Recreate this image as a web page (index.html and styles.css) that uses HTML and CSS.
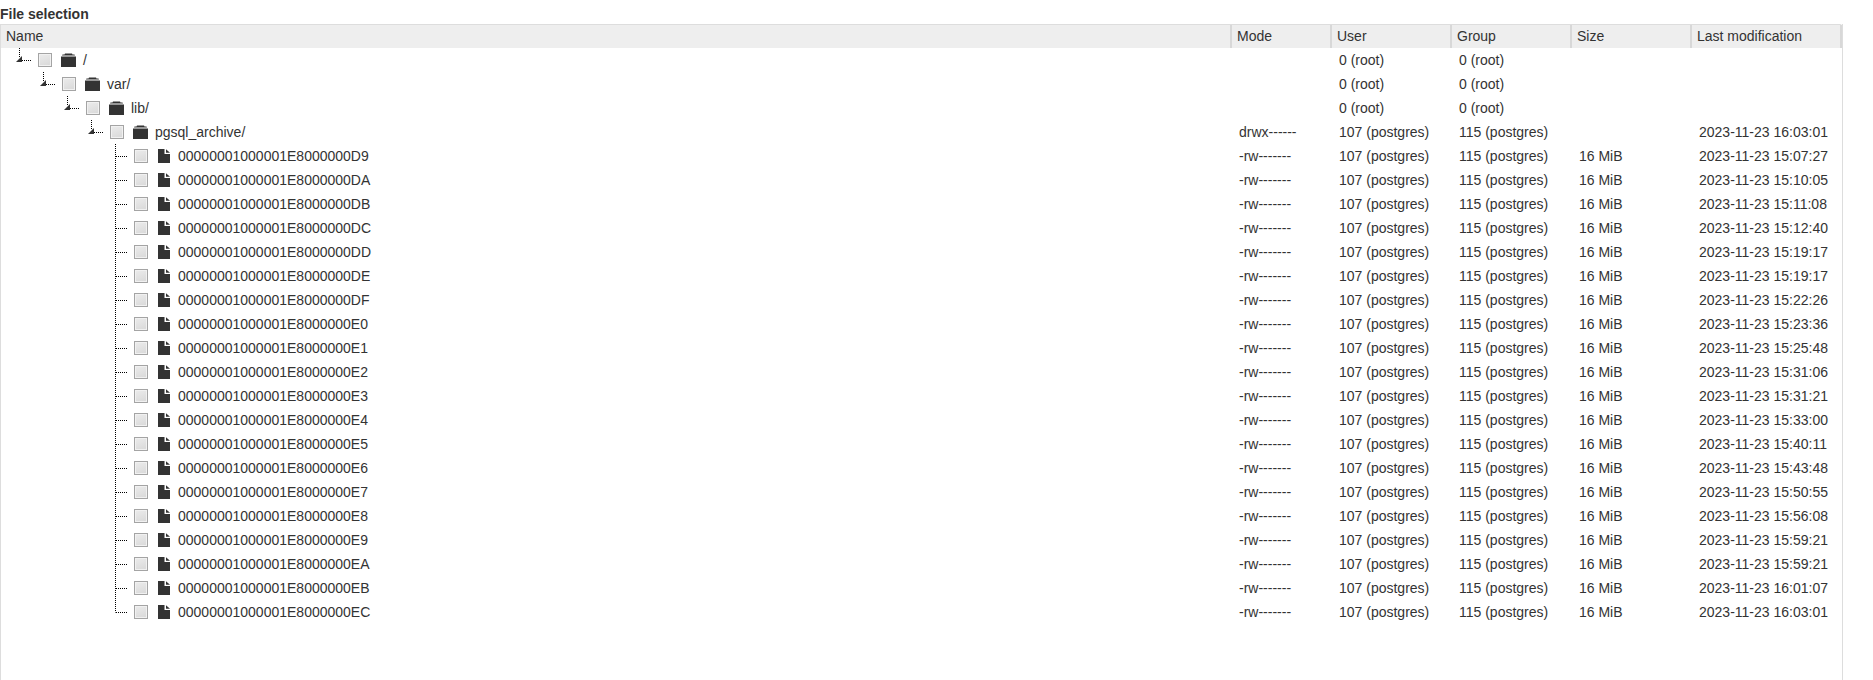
FILE: index.html
```html
<!DOCTYPE html>
<html lang="en">
<head>
<meta charset="utf-8">
<title>File selection</title>
<link rel="stylesheet" href="styles.css">
</head>
<body>
<svg class="defs" width="0" height="0" aria-hidden="true">
<symbol id="folder" viewBox="0 0 15 14"><path d="M0 3.500h15V14H0z M4 0.500h7l0.500 1h2l0.500 1H1l0.500-1h2z" fill="#333"/></symbol>
<symbol id="file" viewBox="0 0 12 14"><path d="M0 0h6.500v5H12V14H0z M8 0.300 12 3.800H8z" fill="#333"/></symbol>
<symbol id="open" viewBox="0 0 24 24"><path d="M5.500 0v10M8 12.500h10" stroke="#000" stroke-dasharray="1 1" fill="none"/><path d="M8 8v6H2z" fill="#333"/></symbol>
<symbol id="branch" viewBox="0 0 24 24"><path d="M5.500 0v24M6 12.500h12" stroke="#000" stroke-dasharray="1 1" fill="none"/></symbol>
<symbol id="last" viewBox="0 0 24 24"><path d="M5.500 0v12.500M6 12.500h12" stroke="#000" stroke-dasharray="1 1" fill="none"/></symbol>
</svg>
<h1 class="title">File selection</h1>
<div class="panel">
<div class="row head"><div class="c name">Name</div><div class="c mode">Mode</div><div class="c user">User</div><div class="c group">Group</div><div class="c size">Size</div><div class="c last">Last modification</div></div>
<div class="row"><div class="c name"><span class="ind l0"></span><svg class="tw"><use href="#open"/></svg><i class="cb"></i><svg class="ic"><use href="#folder"/></svg><span>/</span></div><div class="c mode"></div><div class="c user">0 (root)</div><div class="c group">0 (root)</div><div class="c size"></div><div class="c last"></div></div>
<div class="row"><div class="c name"><span class="ind l1"></span><svg class="tw"><use href="#open"/></svg><i class="cb"></i><svg class="ic"><use href="#folder"/></svg><span>var/</span></div><div class="c mode"></div><div class="c user">0 (root)</div><div class="c group">0 (root)</div><div class="c size"></div><div class="c last"></div></div>
<div class="row"><div class="c name"><span class="ind l2"></span><svg class="tw"><use href="#open"/></svg><i class="cb"></i><svg class="ic"><use href="#folder"/></svg><span>lib/</span></div><div class="c mode"></div><div class="c user">0 (root)</div><div class="c group">0 (root)</div><div class="c size"></div><div class="c last"></div></div>
<div class="row"><div class="c name"><span class="ind l3"></span><svg class="tw"><use href="#open"/></svg><i class="cb"></i><svg class="ic"><use href="#folder"/></svg><span>pgsql_archive/</span></div><div class="c mode">drwx------</div><div class="c user">107 (postgres)</div><div class="c group">115 (postgres)</div><div class="c size"></div><div class="c last">2023-11-23 16:03:01</div></div>
<div class="row"><div class="c name"><span class="ind l4"></span><svg class="tw"><use href="#branch"/></svg><i class="cb"></i><svg class="ic file"><use href="#file"/></svg><span>00000001000001E8000000D9</span></div><div class="c mode">-rw-------</div><div class="c user">107 (postgres)</div><div class="c group">115 (postgres)</div><div class="c size">16 MiB</div><div class="c last">2023-11-23 15:07:27</div></div>
<div class="row"><div class="c name"><span class="ind l4"></span><svg class="tw"><use href="#branch"/></svg><i class="cb"></i><svg class="ic file"><use href="#file"/></svg><span>00000001000001E8000000DA</span></div><div class="c mode">-rw-------</div><div class="c user">107 (postgres)</div><div class="c group">115 (postgres)</div><div class="c size">16 MiB</div><div class="c last">2023-11-23 15:10:05</div></div>
<div class="row"><div class="c name"><span class="ind l4"></span><svg class="tw"><use href="#branch"/></svg><i class="cb"></i><svg class="ic file"><use href="#file"/></svg><span>00000001000001E8000000DB</span></div><div class="c mode">-rw-------</div><div class="c user">107 (postgres)</div><div class="c group">115 (postgres)</div><div class="c size">16 MiB</div><div class="c last">2023-11-23 15:11:08</div></div>
<div class="row"><div class="c name"><span class="ind l4"></span><svg class="tw"><use href="#branch"/></svg><i class="cb"></i><svg class="ic file"><use href="#file"/></svg><span>00000001000001E8000000DC</span></div><div class="c mode">-rw-------</div><div class="c user">107 (postgres)</div><div class="c group">115 (postgres)</div><div class="c size">16 MiB</div><div class="c last">2023-11-23 15:12:40</div></div>
<div class="row"><div class="c name"><span class="ind l4"></span><svg class="tw"><use href="#branch"/></svg><i class="cb"></i><svg class="ic file"><use href="#file"/></svg><span>00000001000001E8000000DD</span></div><div class="c mode">-rw-------</div><div class="c user">107 (postgres)</div><div class="c group">115 (postgres)</div><div class="c size">16 MiB</div><div class="c last">2023-11-23 15:19:17</div></div>
<div class="row"><div class="c name"><span class="ind l4"></span><svg class="tw"><use href="#branch"/></svg><i class="cb"></i><svg class="ic file"><use href="#file"/></svg><span>00000001000001E8000000DE</span></div><div class="c mode">-rw-------</div><div class="c user">107 (postgres)</div><div class="c group">115 (postgres)</div><div class="c size">16 MiB</div><div class="c last">2023-11-23 15:19:17</div></div>
<div class="row"><div class="c name"><span class="ind l4"></span><svg class="tw"><use href="#branch"/></svg><i class="cb"></i><svg class="ic file"><use href="#file"/></svg><span>00000001000001E8000000DF</span></div><div class="c mode">-rw-------</div><div class="c user">107 (postgres)</div><div class="c group">115 (postgres)</div><div class="c size">16 MiB</div><div class="c last">2023-11-23 15:22:26</div></div>
<div class="row"><div class="c name"><span class="ind l4"></span><svg class="tw"><use href="#branch"/></svg><i class="cb"></i><svg class="ic file"><use href="#file"/></svg><span>00000001000001E8000000E0</span></div><div class="c mode">-rw-------</div><div class="c user">107 (postgres)</div><div class="c group">115 (postgres)</div><div class="c size">16 MiB</div><div class="c last">2023-11-23 15:23:36</div></div>
<div class="row"><div class="c name"><span class="ind l4"></span><svg class="tw"><use href="#branch"/></svg><i class="cb"></i><svg class="ic file"><use href="#file"/></svg><span>00000001000001E8000000E1</span></div><div class="c mode">-rw-------</div><div class="c user">107 (postgres)</div><div class="c group">115 (postgres)</div><div class="c size">16 MiB</div><div class="c last">2023-11-23 15:25:48</div></div>
<div class="row"><div class="c name"><span class="ind l4"></span><svg class="tw"><use href="#branch"/></svg><i class="cb"></i><svg class="ic file"><use href="#file"/></svg><span>00000001000001E8000000E2</span></div><div class="c mode">-rw-------</div><div class="c user">107 (postgres)</div><div class="c group">115 (postgres)</div><div class="c size">16 MiB</div><div class="c last">2023-11-23 15:31:06</div></div>
<div class="row"><div class="c name"><span class="ind l4"></span><svg class="tw"><use href="#branch"/></svg><i class="cb"></i><svg class="ic file"><use href="#file"/></svg><span>00000001000001E8000000E3</span></div><div class="c mode">-rw-------</div><div class="c user">107 (postgres)</div><div class="c group">115 (postgres)</div><div class="c size">16 MiB</div><div class="c last">2023-11-23 15:31:21</div></div>
<div class="row"><div class="c name"><span class="ind l4"></span><svg class="tw"><use href="#branch"/></svg><i class="cb"></i><svg class="ic file"><use href="#file"/></svg><span>00000001000001E8000000E4</span></div><div class="c mode">-rw-------</div><div class="c user">107 (postgres)</div><div class="c group">115 (postgres)</div><div class="c size">16 MiB</div><div class="c last">2023-11-23 15:33:00</div></div>
<div class="row"><div class="c name"><span class="ind l4"></span><svg class="tw"><use href="#branch"/></svg><i class="cb"></i><svg class="ic file"><use href="#file"/></svg><span>00000001000001E8000000E5</span></div><div class="c mode">-rw-------</div><div class="c user">107 (postgres)</div><div class="c group">115 (postgres)</div><div class="c size">16 MiB</div><div class="c last">2023-11-23 15:40:11</div></div>
<div class="row"><div class="c name"><span class="ind l4"></span><svg class="tw"><use href="#branch"/></svg><i class="cb"></i><svg class="ic file"><use href="#file"/></svg><span>00000001000001E8000000E6</span></div><div class="c mode">-rw-------</div><div class="c user">107 (postgres)</div><div class="c group">115 (postgres)</div><div class="c size">16 MiB</div><div class="c last">2023-11-23 15:43:48</div></div>
<div class="row"><div class="c name"><span class="ind l4"></span><svg class="tw"><use href="#branch"/></svg><i class="cb"></i><svg class="ic file"><use href="#file"/></svg><span>00000001000001E8000000E7</span></div><div class="c mode">-rw-------</div><div class="c user">107 (postgres)</div><div class="c group">115 (postgres)</div><div class="c size">16 MiB</div><div class="c last">2023-11-23 15:50:55</div></div>
<div class="row"><div class="c name"><span class="ind l4"></span><svg class="tw"><use href="#branch"/></svg><i class="cb"></i><svg class="ic file"><use href="#file"/></svg><span>00000001000001E8000000E8</span></div><div class="c mode">-rw-------</div><div class="c user">107 (postgres)</div><div class="c group">115 (postgres)</div><div class="c size">16 MiB</div><div class="c last">2023-11-23 15:56:08</div></div>
<div class="row"><div class="c name"><span class="ind l4"></span><svg class="tw"><use href="#branch"/></svg><i class="cb"></i><svg class="ic file"><use href="#file"/></svg><span>00000001000001E8000000E9</span></div><div class="c mode">-rw-------</div><div class="c user">107 (postgres)</div><div class="c group">115 (postgres)</div><div class="c size">16 MiB</div><div class="c last">2023-11-23 15:59:21</div></div>
<div class="row"><div class="c name"><span class="ind l4"></span><svg class="tw"><use href="#branch"/></svg><i class="cb"></i><svg class="ic file"><use href="#file"/></svg><span>00000001000001E8000000EA</span></div><div class="c mode">-rw-------</div><div class="c user">107 (postgres)</div><div class="c group">115 (postgres)</div><div class="c size">16 MiB</div><div class="c last">2023-11-23 15:59:21</div></div>
<div class="row"><div class="c name"><span class="ind l4"></span><svg class="tw"><use href="#branch"/></svg><i class="cb"></i><svg class="ic file"><use href="#file"/></svg><span>00000001000001E8000000EB</span></div><div class="c mode">-rw-------</div><div class="c user">107 (postgres)</div><div class="c group">115 (postgres)</div><div class="c size">16 MiB</div><div class="c last">2023-11-23 16:01:07</div></div>
<div class="row"><div class="c name"><span class="ind l4"></span><svg class="tw"><use href="#last"/></svg><i class="cb"></i><svg class="ic file"><use href="#file"/></svg><span>00000001000001E8000000EC</span></div><div class="c mode">-rw-------</div><div class="c user">107 (postgres)</div><div class="c group">115 (postgres)</div><div class="c size">16 MiB</div><div class="c last">2023-11-23 16:03:01</div></div>
</div>
</body>
</html>
```
FILE: styles.css
```css
html, body { margin: 0; padding: 0; height: 680px; overflow: hidden; background: #fff; }
body { font: 14px/24px "Liberation Sans", Arial, sans-serif; color: #333; }
.defs { position: absolute; }
.title { margin: 0; height: 24px; font-size: 14px; line-height: 28px; font-weight: bold; color: #333; }
.panel { width: 1841px; height: 656px; border-left: 1px solid #ddd; border-right: 1px solid #ddd; }
.row { display: flex; height: 24px; }
.c { box-sizing: border-box; padding-left: 7px; white-space: nowrap; flex: none; }
.name { width: 1231px; padding-left: 13px; display: flex; align-items: center; }
.mode { width: 100px; }
.user, .group, .size { width: 120px; }
.last { width: 150px; }
.head { background: #eee; border-top: 1px solid #ddd; box-sizing: border-box; line-height: 22px; border-top-right-radius: 2px; }
.head .c { padding-left: 5px; border-right: 2px solid #d8d8d8; }
.head .name { display: block; }
.ind { flex: none; height: 1px; }
.l0 { width: 0; }
.l1 { width: 24px; }
.l2 { width: 48px; }
.l3 { width: 72px; }
.l4 { width: 96px; }
.tw { flex: none; width: 24px; height: 24px; }
.cb { flex: none; width: 14px; height: 14px; box-sizing: border-box; border: 1px solid #a4a4a4; box-shadow: inset 0 0 0 1px #f1f1f1; background: linear-gradient(160deg, #ececec, #d8d8d8); margin-right: 9px; }
.ic { flex: none; width: 15px; height: 14px; margin-right: 7px; }
.file { width: 12px; margin-left: 1px; margin-right: 8px; }
```
